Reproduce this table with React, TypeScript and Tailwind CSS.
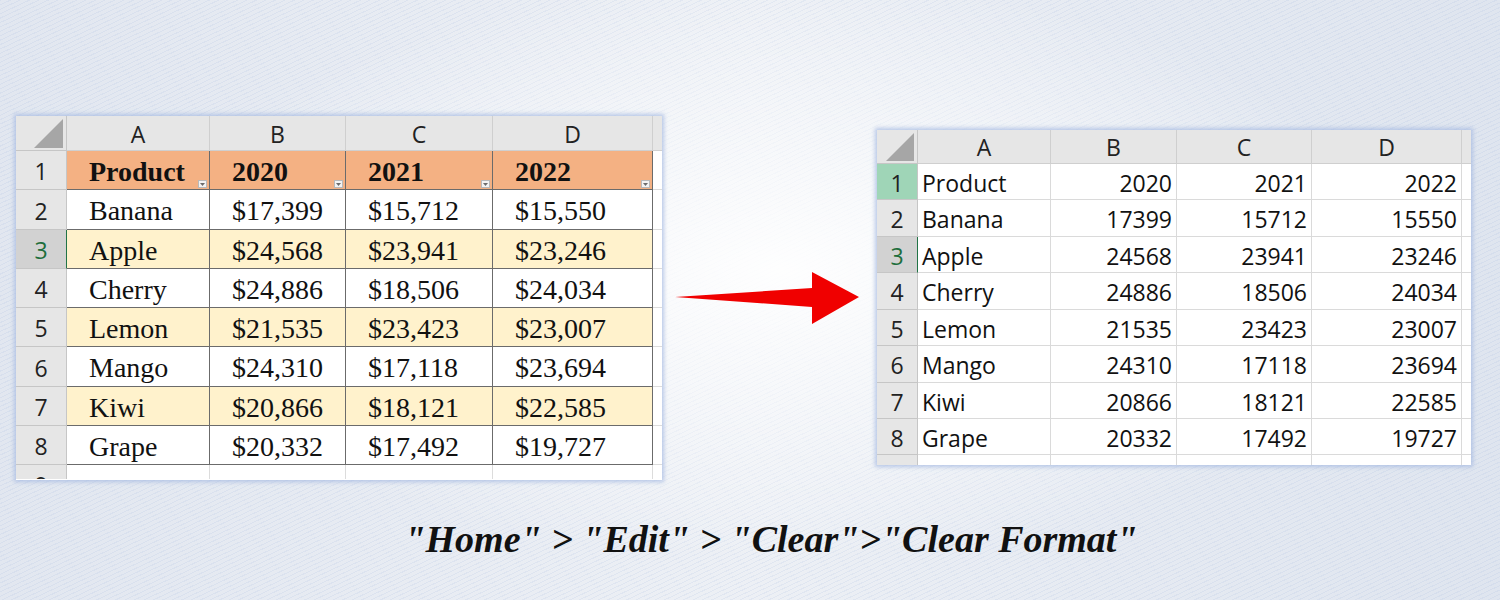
import React from "react";

const sans = "font-['Open_Sans',sans-serif]";
const serif = "font-['Liberation_Serif','Times_New_Roman',serif]";

type Row = { name: string; v: string[] };

const leftRows: Row[] = [
  { name: "Banana", v: ["$17,399", "$15,712", "$15,550"] },
  { name: "Apple", v: ["$24,568", "$23,941", "$23,246"] },
  { name: "Cherry", v: ["$24,886", "$18,506", "$24,034"] },
  { name: "Lemon", v: ["$21,535", "$23,423", "$23,007"] },
  { name: "Mango", v: ["$24,310", "$17,118", "$23,694"] },
  { name: "Kiwi", v: ["$20,866", "$18,121", "$22,585"] },
  { name: "Grape", v: ["$20,332", "$17,492", "$19,727"] },
];

const rightRows: Row[] = [
  { name: "Banana", v: ["17399", "15712", "15550"] },
  { name: "Apple", v: ["24568", "23941", "23246"] },
  { name: "Cherry", v: ["24886", "18506", "24034"] },
  { name: "Lemon", v: ["21535", "23423", "23007"] },
  { name: "Mango", v: ["24310", "17118", "23694"] },
  { name: "Kiwi", v: ["20866", "18121", "22585"] },
  { name: "Grape", v: ["20332", "17492", "19727"] },
];

const leftColW = ["w-[143px]", "w-[136px]", "w-[147px]", "w-[160px]"];
const leftRowH = ["h-[40px]", "h-[39px]", "h-[39px]", "h-[39px]", "h-[40px]", "h-[39px]", "h-[39px]"];
const rightColW = ["w-[133px]", "w-[126px]", "w-[135px]", "w-[150px]"];
const rightRowH = ["h-[37px]", "h-[36px]", "h-[37px]", "h-[36px]", "h-[37px]", "h-[36px]", "h-[36px]"];

function Corner({ w, h }: { w: number; h: number }) {
  return (
    <svg width={w} height={h} className="block">
      <polygon points={`${w - 3},3 ${w - 3},${h - 2} ${w - 3 - (h - 5)},${h - 2}`} fill="#a6a6a6" />
    </svg>
  );
}

function FilterBtn() {
  return (
    <div className="absolute right-[2px] bottom-[1px] w-[9px] h-[8px] bg-[#f3f3f3] border border-[#b9b9b9] flex items-center justify-center">
      <svg width="5" height="3" className="block">
        <polygon points="0,0 5,0 2.5,3" fill="#6b6b6b" />
      </svg>
    </div>
  );
}

function LeftTable() {
  return (
    <div className="w-[646px] h-[364px] bg-white overflow-hidden flex flex-col shrink-0 shadow-[0_0_4px_2px_rgba(165,185,225,0.75)]">
      <div className={`flex h-[35px] bg-[#e6e6e6] ${sans} text-[23px] text-[#222]`}>
        <div className="w-[51px] h-full border-r border-b border-[#c6c6c6]">
          <Corner w={50} h={34} />
        </div>
        {["A", "B", "C", "D"].map((c, i) => (
          <div key={c} className={`${leftColW[i]} h-full flex items-center justify-center pt-[2px] border-r border-b border-[#cfcfcf]`}>
            {c}
          </div>
        ))}
        <div className="w-[9px] h-full border-b border-[#cfcfcf]" />
      </div>
      <div className="flex h-[39px]">
        <div className={`w-[51px] h-full bg-[#e6e6e6] border-r border-b border-[#c6c6c6] flex items-center justify-center pt-[3px] ${sans} text-[23px] text-[#222]`}>1</div>
        {["Product", "2020", "2021", "2022"].map((c, i) => (
          <div key={c} className={`${leftColW[i]} relative h-full bg-[#f4b183] border-r border-b border-[#6b6b6b] flex items-center pl-[22px] pt-[4px] ${serif} font-bold text-[28px] text-[#111]`}>
            {c}
            <FilterBtn />
          </div>
        ))}
        <div className="w-[9px] h-full border-b border-[#dcdcdc]" />
      </div>
      {leftRows.map((r, ri) => {
        const sel = ri === 1;
        const bg = ri % 2 === 1 ? "bg-[#fff2cc]" : "bg-white";
        return (
          <div key={r.name} className={`flex ${leftRowH[ri]}`}>
            <div
              className={`w-[51px] h-full border-b border-[#c6c6c6] flex items-center justify-center pt-[3px] ${sans} text-[23px] ${
                sel ? "bg-[#d2d2d2] text-[#1e6e3c] border-r border-r-[#217346]" : "bg-[#e6e6e6] text-[#222] border-r"
              }`}
            >
              {ri + 2}
            </div>
            {[r.name, ...r.v].map((c, i) => (
              <div key={i} className={`${leftColW[i]} h-full ${bg} border-r border-b border-[#6b6b6b] flex items-center pl-[22px] pt-[3px] ${serif} text-[28px] text-[#111]`}>
                {c}
              </div>
            ))}
            <div className="w-[9px] h-full border-b border-[#dcdcdc]" />
          </div>
        );
      })}
      <div className="flex h-[14px] overflow-hidden">
        <div className={`w-[51px] h-full bg-[#e6e6e6] border-r border-[#c6c6c6] overflow-hidden flex justify-center ${sans} text-[23px] leading-[39px] text-[#222]`}>
          <span className="block mt-[1px]">9</span>
        </div>
        {[0, 1, 2, 3].map((i) => (
          <div key={i} className={`${leftColW[i]} h-full border-r border-[#dcdcdc]`} />
        ))}
      </div>
    </div>
  );
}

function RightTable() {
  return (
    <div className="ml-[17px] mt-[14px] w-[594px] h-[335px] bg-white overflow-hidden flex flex-col shrink-0 shadow-[0_0_4px_2px_rgba(165,185,225,0.75)]">
      <div className={`flex h-[34px] bg-[#e6e6e6] ${sans} text-[23px] text-[#222]`}>
        <div className="w-[41px] h-full border-r border-b border-[#c6c6c6]">
          <Corner w={40} h={33} />
        </div>
        {["A", "B", "C", "D"].map((c, i) => (
          <div key={c} className={`${rightColW[i]} h-full flex items-center justify-center pt-[2px] border-r border-b border-[#cfcfcf]`}>
            {c}
          </div>
        ))}
        <div className="w-[9px] h-full border-b border-[#cfcfcf]" />
      </div>
      <div className={`flex h-[36px] ${sans} text-[23px] text-[#111]`}>
        <div className="w-[41px] h-full bg-[#9fd5b7] border-r border-b border-[#c6c6c6] flex items-center justify-center pt-[3px] text-[#222]">1</div>
        {["Product", "2020", "2021", "2022"].map((c, i) => (
          <div key={c} className={`${rightColW[i]} h-full border-r border-b border-[#dadada] flex items-center pt-[3px] ${i === 0 ? "pl-[4px]" : "justify-end pr-[4px]"}`}>
            {c}
          </div>
        ))}
        <div className="w-[9px] h-full border-b border-[#dadada]" />
      </div>
      {rightRows.map((r, ri) => {
        const sel = ri === 1;
        return (
          <div key={r.name} className={`flex ${rightRowH[ri]} ${sans} text-[23px] text-[#111]`}>
            <div
              className={`w-[41px] h-full border-b border-[#c6c6c6] flex items-center justify-center pt-[3px] ${
                sel ? "bg-[#d2d2d2] text-[#1e6e3c] border-r border-r-[#217346]" : "bg-[#e6e6e6] text-[#222] border-r"
              }`}
            >
              {ri + 2}
            </div>
            {[r.name, ...r.v].map((c, i) => (
              <div key={i} className={`${rightColW[i]} h-full border-r border-b border-[#dadada] flex items-center pt-[3px] ${i === 0 ? "pl-[4px]" : "justify-end pr-[4px]"}`}>
                {c}
              </div>
            ))}
            <div className="w-[9px] h-full border-b border-[#dadada]" />
          </div>
        );
      })}
      <div className="flex h-[10px]">
        <div className="w-[41px] h-full bg-[#e6e6e6] border-r border-[#c6c6c6]" />
        {[0, 1, 2, 3].map((i) => (
          <div key={i} className={`${rightColW[i]} h-full border-r border-[#dadada]`} />
        ))}
      </div>
    </div>
  );
}

function Arrow() {
  return (
    <svg width="185" height="53" className="block ml-[13px] mt-[156px] shrink-0">
      <polygon points="0,25 137,16 137,0 184,25 137,52 137,35" fill="#f00000" />
    </svg>
  );
}

export default function App() {
  return (
    <div className="w-[1500px] h-[600px] overflow-hidden flex flex-col bg-[radial-gradient(ellipse_55%_65%_at_52%_45%,rgba(255,255,255,0.95),rgba(255,255,255,0)_75%),repeating-linear-gradient(155deg,rgba(160,182,222,0.16)_0px,rgba(160,182,222,0.16)_1px,transparent_1px,transparent_4px),linear-gradient(90deg,#e2e7f0,#edf0f5_50%,#dfe5ef)]">
      <div className="flex items-start pt-[116px] pl-[16px]">
        <LeftTable />
        <Arrow />
        <RightTable />
      </div>
      <div className="flex justify-center pl-[42px] mt-[35px]">
        <div className={`${serif} italic font-bold text-[38px] leading-[48px] text-[#111] whitespace-pre`}>
          "Home" &gt; "Edit" &gt; "Clear"&gt;"Clear Format"
        </div>
      </div>
    </div>
  );
}
